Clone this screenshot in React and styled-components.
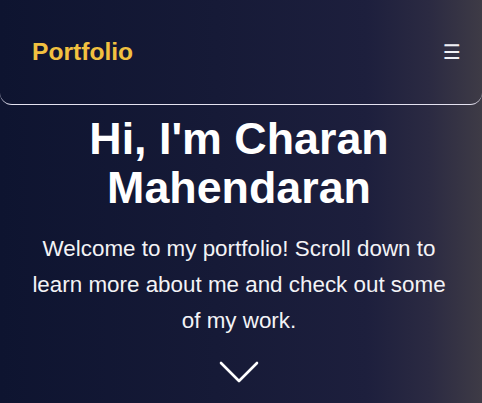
import React from "react";
import styled, { createGlobalStyle } from "styled-components";

const Global = createGlobalStyle`
  html, body { margin: 0; padding: 0; }
  body {
    font-family: "Liberation Sans", Arial, sans-serif;
    background: linear-gradient(to right, #0e1430 0%, #161a37 45%, #1d1f3d 76%, #2b2a42 89%, #3e3b46 100%);
    min-height: 100vh;
    color: #f5f5f5;
  }
`;

const Page = styled.div`
  min-height: 100vh;
  display: flex;
  flex-direction: column;
`;

const Header = styled.header`
  box-sizing: content-box;
  height: 104px;
  display: flex;
  align-items: center;
  justify-content: space-between;
  padding: 0 21px 0 32px;
  border-bottom: 1px solid #e4e2f0;
  border-radius: 0 0 12px 12px;
`;

const Logo = styled.div`
  font-size: 24.6px;
  font-weight: 700;
  color: #f2c140;
`;

const Burger = styled.button`
  background: none;
  border: none;
  padding: 0;
  color: #f0f0f5;
  font-family: "DejaVu Sans", sans-serif;
  font-size: 20px;
  line-height: 1;
  cursor: pointer;
`;

const Hero = styled.section`
  display: flex;
  flex-direction: column;
  align-items: center;
  text-align: center;
  padding: 9px 26px 0 22px;
`;

const Title = styled.h1`
  margin: 0;
  font-size: 44.8px;
  line-height: 1.1;
  font-weight: 700;
  color: #ffffff;
`;

const Intro = styled.p`
  margin: 18px 0 0;
  font-size: 22.4px;
  line-height: 1.62;
  color: #f3f3f6;
`;

const Down = styled.div`
  margin-top: 22px;
  display: flex;
  justify-content: center;
`;

export default function App() {
  return (
    <Page>
      <Global />
      <Header>
        <Logo>Portfolio</Logo>
        <Burger aria-label="menu">☰</Burger>
      </Header>
      <Hero>
        <Title>
          Hi, I'm Charan
          <br />
          Mahendaran
        </Title>
        <Intro>
          Welcome to my portfolio! Scroll down to learn more about me and check out some of my work.
        </Intro>
        <Down>
          <svg width="40" height="22" viewBox="0 0 40 22" fill="none">
            <polyline points="2,2 20,20 38,2" stroke="#ffffff" strokeWidth="2.6" strokeLinecap="round" strokeLinejoin="round" />
          </svg>
        </Down>
      </Hero>
    </Page>
  );
}
